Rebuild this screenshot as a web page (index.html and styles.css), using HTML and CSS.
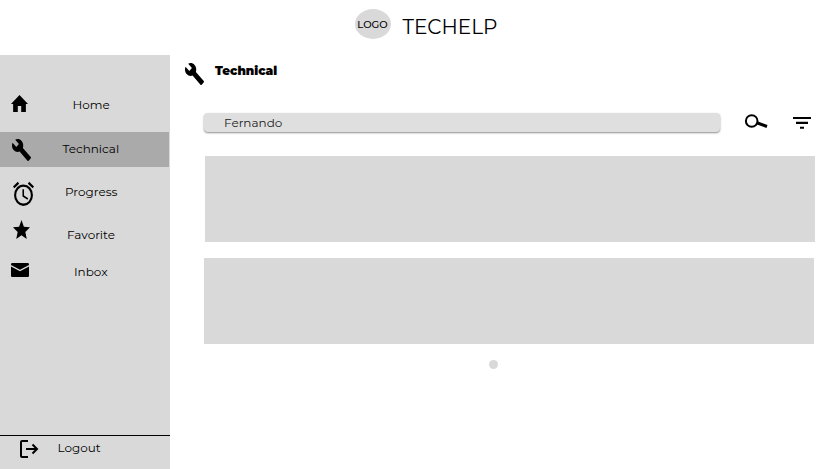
FILE: index.html
```html
<!DOCTYPE html>
<html lang="en">
<head>
<meta charset="utf-8">
<title>TECHELP</title>
<link rel="stylesheet" href="styles.css">
</head>
<body>
<header class="topbar">
  <div class="logo"><span>LOGO</span></div>
  <h1 class="brand">TECHELP</h1>
</header>
<div class="layout">
  <nav class="sidebar">
    <a class="item home"><svg class="icon" viewBox="2 3 20 17" preserveAspectRatio="none"><path d="M4.500 20h5.500v-6h4v6h5.500v-8H22L12 3 2 12h2.500z"/></svg><span class="label">Home</span></a>
    <a class="item technical"><svg class="icon" viewBox="1 1 22 22" preserveAspectRatio="none"><path d="M22.7 19l-9.1-9.1c.9-2.3.4-5-1.5-6.9-2-2-5-2.4-7.4-1.3L9 6 6 9 1.6 4.7C.4 7.1.9 10.1 2.9 12.1c1.9 1.9 4.6 2.4 6.9 1.5l9.1 9.1c.4.4 1 .4 1.4 0l2.3-2.3c.5-.4.5-1.1.1-1.4z"/></svg><span class="label">Technical</span></a>
    <a class="item progress"><svg class="icon" viewBox="2 2 20 20" preserveAspectRatio="none"><path d="M22 5.72l-4.6-3.86-1.29 1.53 4.6 3.86L22 5.72zM7.88 3.39L6.6 1.86 2 5.71l1.29 1.53 4.59-3.85zM12.5 8H11v6l4.75 2.85.75-1.23-4-2.37V8zM12 4a9 9 0 1 0 0 18 9 9 0 0 0 0-18zm0 16a7 7 0 1 1 0-14 7 7 0 0 1 0 14z"/></svg><span class="label">Progress</span></a>
    <a class="item favorite"><svg class="icon" viewBox="2 2 20 19" preserveAspectRatio="none"><path d="M12 17.27L18.18 21l-1.64-7.03L22 9.24l-7.19-.61L12 2 9.19 8.63 2 9.24l5.46 4.73L5.82 21z"/></svg><span class="label">Favorite</span></a>
    <a class="item inbox"><svg class="icon" viewBox="2 4 20 16" preserveAspectRatio="none"><path d="M20.500 4h-17C2.700 4 2 4.700 2 5.500v13c0 .8.7 1.500 1.500 1.500h17c.8 0 1.500-.7 1.500-1.500v-13c0-.8-.7-1.500-1.500-1.500zM22 8l-10 5.500L2 8V6.200l10 5.500 10-5.500V8z"/></svg><span class="label">Inbox</span></a>
    <a class="item logout"><svg class="icon" viewBox="0 0 19 18"><path class="line" d="M9 1H3Q2 1 2 2v14q0 1 1 1h6M7 9h11M13.500 4.500L18 9l-4.500 4.500"/></svg><span class="label">Logout</span></a>
  </nav>
  <main class="content">
    <div class="heading">
      <svg class="icon" viewBox="1 1 22 22" preserveAspectRatio="none"><path d="M22.7 19l-9.1-9.1c.9-2.3.4-5-1.5-6.9-2-2-5-2.4-7.4-1.3L9 6 6 9 1.6 4.7C.4 7.1.9 10.1 2.9 12.1c1.9 1.9 4.6 2.4 6.9 1.5l9.1 9.1c.4.4 1 .4 1.4 0l2.3-2.3c.5-.4.5-1.1.1-1.4z"/></svg>
      <h2 class="title">Technical</h2>
    </div>
    <div class="search">
      <div class="field"><span>Fernando</span></div>
      <svg class="find" viewBox="0 0 24 16"><circle class="line" cx="6.700" cy="7" r="5.800"/><path class="handle" d="M12.500 9L22 12.500"/></svg>
      <svg class="filter" viewBox="0 0 18 12"><path d="M0 0h18v2H0zM3 4.700h12v2.300H3zM7 9.700h4v2H7z"/></svg>
    </div>
    <div class="card first"></div>
    <div class="card"></div>
    <div class="dot"></div>
  </main>
</div>
</body>
</html>
```

FILE: styles.css
```css
* { box-sizing: border-box; }
body {
  margin: 0;
  height: 469px;
  overflow: hidden;
  background: #fff;
  color: #000;
  font: 12px/16px Montserrat, Inter, sans-serif;
}
svg { display: block; flex: none; overflow: visible; }
.topbar { display: flex; height: 55px; padding: 9px 0 0 355px; }
.logo {
  display: flex;
  align-items: center;
  justify-content: center;
  width: 36px;
  height: 30px;
  padding: 1px 1px 0 0;
  border-radius: 50%;
  background: #d9d9d9;
  font-size: 10px;
  font-weight: 500;
}
.brand {
  margin: 6px 0 0 11.5px;
  font-size: 20px;
  line-height: 24px;
  font-weight: 400;
}
.layout { display: grid; grid-template-columns: 170px 1fr; height: 414px; }
.sidebar {
  display: flex;
  flex-direction: column;
  padding-top: 33px;
  background: #d9d9d9;
}
.item { display: flex; align-items: flex-start; flex: none; }
.label { flex: none; white-space: nowrap; }
.home { height: 44px; padding: 7px 0 0 11px; }
.home .icon { width: 17px; height: 17px; }
.home .label { margin: 2px 0 0 44.5px; }
.technical { width: 169px; height: 35px; padding: 7px 0 0 12px; background: #aaa; }
.technical .icon { width: 19px; height: 22px; }
.technical .label { margin: 2px 0 0 31.5px; }
.progress { height: 43px; padding: 15px 0 0 13px; }
.progress .icon { width: 21px; height: 24px; }
.progress .label { margin: 2px 0 0 31px; }
.favorite { height: 43px; padding: 10px 0 0 13px; }
.favorite .icon { width: 17px; height: 19px; }
.favorite .label { margin: 7px 0 0 37px; }
.inbox { padding: 10px 0 0 10.5px; }
.inbox .icon { width: 18px; height: 14px; }
.inbox .label { margin: 1px 0 0 45.5px; }
.logout {
  height: 34px;
  margin-top: auto;
  padding: 4px 0 0 19px;
  border-top: 1px solid #000;
}
.logout .icon { width: 19px; height: 18px; }
.logout .label { margin-left: 19.5px; }
.line { fill: none; stroke: #000; stroke-width: 2; }
.handle { fill: none; stroke: #000; stroke-width: 3; }
.content { padding: 8px 19px 0 34px; }
.heading { display: flex; height: 50px; margin-left: -19px; }
.heading .icon { width: 19px; height: 22px; }
.title {
  margin: 0 0 0 11px;
  font-size: 12px;
  font-weight: 900;
  line-height: 16px;
}
.search { display: flex; height: 43px; }
.field {
  width: 516px;
  height: 19px;
  padding: 2px 0 0 20px;
  border-radius: 4px;
  background: #dfdfdf;
  box-shadow: 0 1px 2px rgba(0, 0, 0, 0.45);
  color: #222;
}
.find { width: 24px; height: 16px; margin: 1px 0 0 25px; }
.filter { width: 18px; height: 12px; margin: 4px 0 0 24px; }
.card { width: 610px; height: 86px; background: #d9d9d9; }
.first { margin: 0 0 16px 1px; }
.dot {
  width: 9px;
  height: 9px;
  margin: 16px 0 0 285px;
  border-radius: 50%;
  background: #d9d9d9;
}
```
